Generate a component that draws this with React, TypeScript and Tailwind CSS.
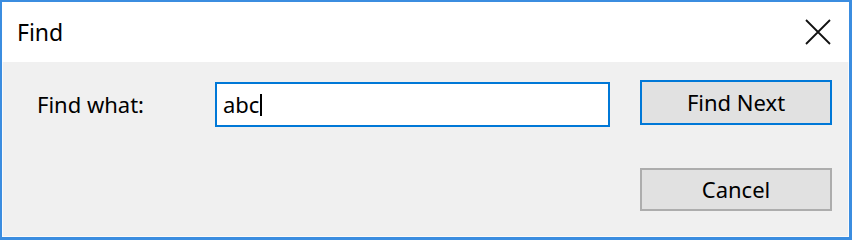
const font = { fontFamily: '"Segoe UI", "Noto Sans", "Open Sans", sans-serif' };

const DialogButton = ({ label, focused = false }: { label: string; focused?: boolean }) => (
  <button
    className={`w-[192px] bg-[#e1e1e1] text-[22px] text-black border-2 ${
      focused ? "h-[45px] border-[#0078d7]" : "h-[43px] border-[#adadad]"
    }`}
  >
    {label}
  </button>
);

const CloseIcon = () => (
  <svg width="26" height="26" viewBox="0 0 26 26" className="text-[#111]">
    <path d="M1 1L25 25M25 1L1 25" stroke="currentColor" strokeWidth="1.8" />
  </svg>
);

export default function App() {
  return (
    <div
      className="w-[852px] h-[240px] bg-[#f0f0f0] border-l-2 border-t-2 border-r-[3px] border-b-[3px] border-[#3b8de0] flex flex-col"
      style={font}
    >
      {/* Title bar */}
      <div className="h-[60px] bg-white flex items-center justify-between pl-[15px] pr-[18px]">
        <span className="text-[23px] text-black">Find</span>
        <CloseIcon />
      </div>

      {/* Body */}
      <div className="flex-1 border-l border-r border-b border-[#fbfbfb] pl-[34px] pt-[18px] flex flex-col">
        <div className="flex items-start">
          <div className="w-[178px] h-[45px] mt-[2px] flex items-center text-[22px] text-black">Find what:</div>
          <div className="w-[395px] h-[45px] mt-[2px] bg-white border-2 border-[#0078d7] flex items-center pl-[6px] text-[22px] text-black">
            <span>abc</span>
            <span className="w-[2px] h-[22px] bg-black ml-[1px]" />
          </div>
          <div className="ml-[30px]">
            <DialogButton label="Find Next" focused />
          </div>
        </div>
        <div className="flex justify-end pr-[16px] mt-[41px]">
          <DialogButton label="Cancel" />
        </div>
      </div>
    </div>
  );
}
